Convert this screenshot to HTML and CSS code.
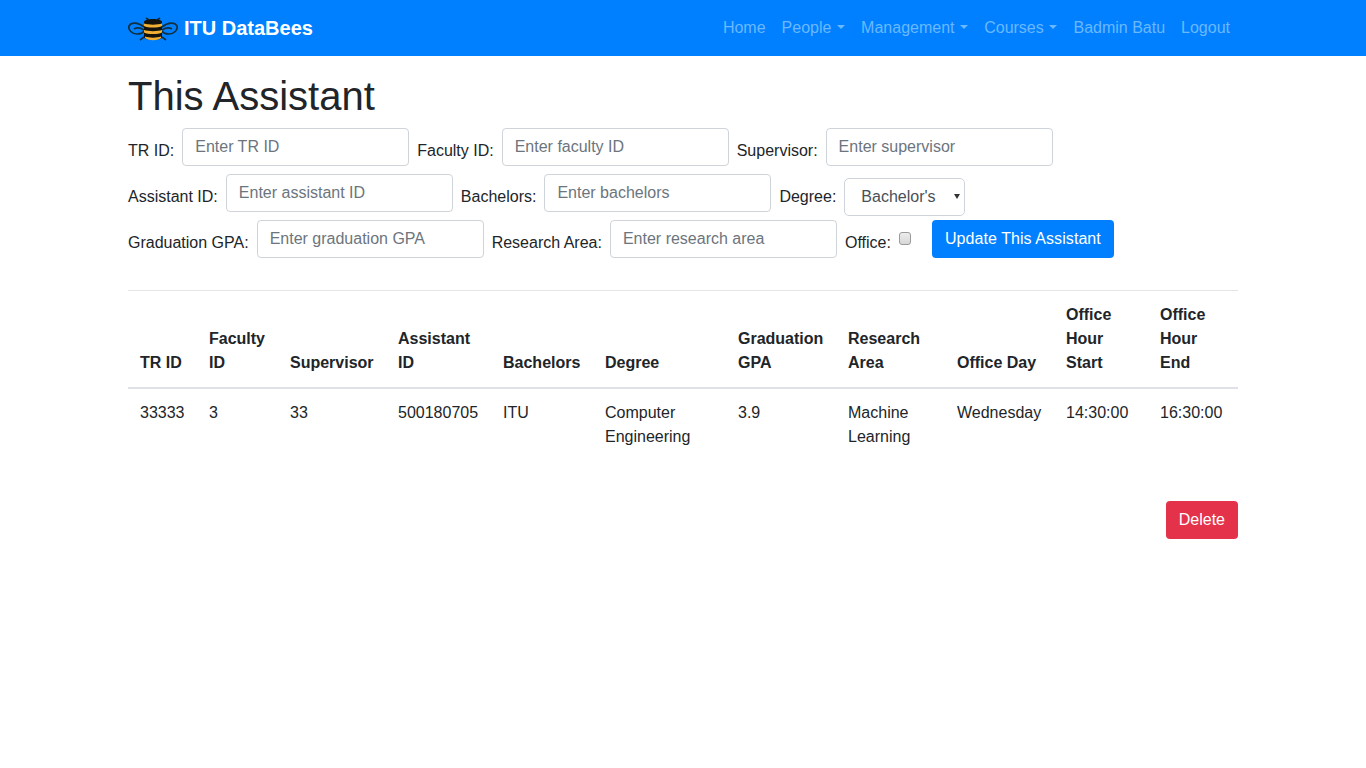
FILE: index.html
```html
<!DOCTYPE html>
<html>
<head>
<meta charset="utf-8">
<title>This Assistant</title>
<link rel="stylesheet" href="styles.css">
</head>
<body>

  <nav class="navbar">
    <div class="container nav-inner">
      <a class="brand" href="#">
        <svg class="logo" width="50" height="26" viewBox="0 0 50 26">
          <g fill="none" stroke="#12303f" stroke-width="1.700">
            <path d="M16 12C10 7 3 7 1 11C0 15 4 19 9 19C12 19 15 18 16 16"/>
            <path d="M34 12C40 7 47 7 49 11C50 15 46 19 41 19C38 19 35 18 34 16"/>
            <path d="M6 14C9 12 13 13 16 15M44 14C41 12 37 13 34 15"/>
            <path d="M21 5L18 3M29 5L32 3M16 22L12 25M34 22L38 25"/>
          </g>
          <path d="M16 7C16 3 34 3 34 7V22C34 26 16 26 16 22Z" fill="#14140f"/>
          <path d="M16 8.500C20 10 30 10 34 8.500V11C30 13 20 13 16 11Z" fill="#f2b134"/>
          <path d="M16 15C20 16.500 30 16.500 34 15V17.500C30 19.500 20 19.500 16 17.500Z" fill="#f2b134"/>
          <path d="M17 21.500C21 23 29 23 33 21.500V23C29 26 21 26 17 23Z" fill="#f2b134"/>
        </svg>
        ITU DataBees
      </a>
      <ul class="nav-links">
        <li><a href="#">Home</a></li>
        <li><a class="drop" href="#">People</a></li>
        <li><a class="drop" href="#">Management</a></li>
        <li><a class="drop" href="#">Courses</a></li>
        <li><a href="#">Badmin Batu</a></li>
        <li><a href="#">Logout</a></li>
      </ul>
    </div>
  </nav>

  <div class="container">
    <h1>This Assistant</h1>

    <form class="edit-form">
      <div class="form-row">
        <label>TR ID:</label><input class="field" placeholder="Enter TR ID">
        <label>Faculty ID:</label><input class="field" placeholder="Enter faculty ID">
        <label>Supervisor:</label><input class="field" placeholder="Enter supervisor">
      </div>
      <div class="form-row">
        <label>Assistant ID:</label><input class="field" placeholder="Enter assistant ID">
        <label>Bachelors:</label><input class="field" placeholder="Enter bachelors">
        <label>Degree:</label>
        <div class="picker-wrap">
          <select class="picker">
            <option>Bachelor's</option>
          </select>
        </div>
      </div>
      <div class="form-row">
        <label>Graduation GPA:</label><input class="field" placeholder="Enter graduation GPA">
        <label>Research Area:</label><input class="field" placeholder="Enter research area">
        <label>Office:</label><input class="tick" type="checkbox">
        <button class="btn btn-primary btn-update" type="button">Update This Assistant</button>
      </div>
    </form>

    <hr>

    <table class="data">
      <colgroup>
        <col><col><col><col><col><col><col><col><col><col><col>
      </colgroup>
      <thead>
        <tr>
          <th>TR ID</th>
          <th>Faculty ID</th>
          <th>Supervisor</th>
          <th>Assistant ID</th>
          <th>Bachelors</th>
          <th>Degree</th>
          <th>Graduation GPA</th>
          <th>Research Area</th>
          <th>Office Day</th>
          <th>Office Hour Start</th>
          <th>Office Hour End</th>
        </tr>
      </thead>
      <tbody>
        <tr>
          <td>33333</td>
          <td>3</td>
          <td>33</td>
          <td>500180705</td>
          <td>ITU</td>
          <td>Computer Engineering</td>
          <td>3.9</td>
          <td>Machine Learning</td>
          <td>Wednesday</td>
          <td>14:30:00</td>
          <td>16:30:00</td>
        </tr>
      </tbody>
    </table>

    <div class="actions">
      <button class="btn btn-danger" type="button">Delete</button>
    </div>
  </div>

</body>
</html>
```

FILE: styles.css
```css
* {
  box-sizing: border-box;
}
html, body {
  height: 100%;
}
body {
  margin: 0;
  background-color: #fff;
  color: #212529;
  font-family: "Liberation Sans", Arial, sans-serif;
  font-size: 16px;
  line-height: 1.5;
}
a {
  text-decoration: none;
}

.container {
  width: 1140px;
  margin: 0 auto;
  padding: 0 15px;
}

.navbar {
  height: 56px;
  background-color: #0080ff;
}
.nav-inner {
  display: flex;
  align-items: center;
  justify-content: space-between;
  height: 56px;
}
.brand {
  display: flex;
  align-items: center;
  color: #fff;
  font-size: 20px;
  font-weight: bold;
}
.logo {
  margin-right: 6px;
}
.nav-links {
  display: flex;
  margin: 0;
  padding: 0;
  list-style: none;
}
.nav-links a {
  display: block;
  padding: 8px;
  color: #6ab8ff;
  white-space: nowrap;
}
.nav-links .drop::after {
  content: "";
  display: inline-block;
  margin-left: 5.7px;
  vertical-align: .255em;
  border-top: .3em solid;
  border-left: .3em solid transparent;
  border-right: .3em solid transparent;
}

h1 {
  margin: 16px 0 8px;
  font-size: 40px;
  font-weight: 500;
  line-height: 1.2;
}

.edit-form {
  margin-bottom: 32px;
}
.form-row {
  display: flex;
  align-items: flex-start;
  height: 38px;
  margin-bottom: 8px;
}
.form-row label {
  margin: 11px 8px 0 0;
  white-space: nowrap;
}
.field {
  width: 227px;
  height: 38px;
  margin-right: 8px;
  padding: 6px 12px;
  border: 1px solid #ced4da;
  border-radius: 4px;
  color: #495057;
  font: inherit;
}
.field::placeholder {
  color: #6c757d;
  opacity: 1;
}
.picker-wrap {
  position: relative;
  margin-top: 4px;
}
.picker-wrap::after {
  content: "";
  position: absolute;
  top: 16px;
  right: 5px;
  border-top: 5px solid #333;
  border-left: 3.5px solid transparent;
  border-right: 3.5px solid transparent;
  pointer-events: none;
}
.picker {
  display: block;
  width: 121px;
  height: 38px;
  padding: 6px 12px 6px 16px;
  border: 1px solid #ced4da;
  border-radius: 5px;
  background-color: #fff;
  color: #495057;
  font: inherit;
  appearance: none;
}
.tick {
  width: 12px;
  height: 13px;
  margin: 12px 21px 0 0;
  border: 1px solid #9a9a9a;
  border-radius: 3px;
  background: linear-gradient(#ececec, #d8d8d8);
  appearance: none;
}
.btn {
  padding: 6px 12px;
  border: 1px solid transparent;
  border-radius: 4px;
  color: #fff;
  font: inherit;
}
.btn-primary {
  background-color: #0080ff;
}
.btn-update {
  width: 182px;
  letter-spacing: .07px;
}
.btn-danger {
  background-color: #e3324a;
}

hr {
  margin: 0;
  border: 0;
  border-top: 1px solid rgba(0, 0, 0, .1);
}

.data {
  width: 100%;
  border-collapse: collapse;
  table-layout: fixed;
}
.data col:nth-child(1) { width: 69px; }
.data col:nth-child(2) { width: 81px; }
.data col:nth-child(3) { width: 108px; }
.data col:nth-child(4) { width: 105px; }
.data col:nth-child(5) { width: 102px; }
.data col:nth-child(6) { width: 133px; }
.data col:nth-child(7) { width: 110px; }
.data col:nth-child(8) { width: 109px; }
.data col:nth-child(9) { width: 109px; }
.data col:nth-child(10) { width: 94px; }
.data col:nth-child(11) { width: 90px; }
.data th, .data td {
  padding: 12px;
  text-align: left;
}
.data th {
  vertical-align: bottom;
  border-bottom: 2px solid #dee2e6;
}
.data td {
  vertical-align: top;
}

.actions {
  display: flex;
  justify-content: flex-end;
  margin-top: 40px;
}
```
